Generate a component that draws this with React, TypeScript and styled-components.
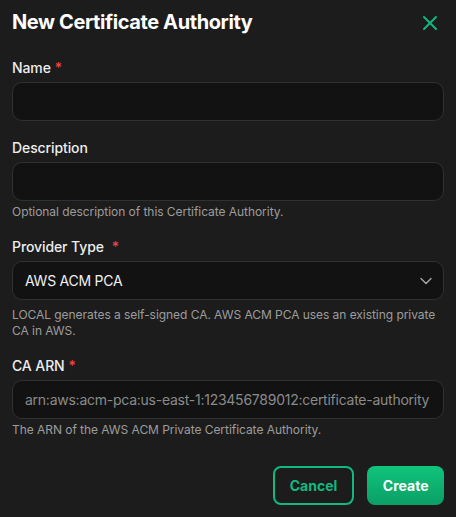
import React from "react";
import styled, { createGlobalStyle } from "styled-components";
import { X, ChevronDown } from "lucide-react";

const Global = createGlobalStyle`
  html, body {
    margin: 0;
    padding: 0;
    background: #1c1c1c;
  }
  * { box-sizing: border-box; }
  body {
    font-family: Inter, "Noto Sans", "Liberation Sans", sans-serif;
    color: #ececec;
    -webkit-font-smoothing: antialiased;
  }
`;

const Dialog = styled.div`
  width: 456px;
  height: 517px;
  background: #1c1c1c;
  padding: 4px 12px 12px 12px;
  display: flex;
  flex-direction: column;
`;

const Header = styled.div`
  display: flex;
  align-items: center;
  justify-content: space-between;
  height: 36px;
`;

const Title = styled.h2`
  margin: 0;
  font-size: 20px;
  line-height: 28px;
  font-weight: 700;
  color: #ffffff;
  letter-spacing: -0.4px;
`;

const CloseButton = styled.button`
  background: none;
  border: none;
  padding: 0;
  margin-right: 2px;
  margin-top: 2px;
  color: #10b981;
  display: flex;
  cursor: pointer;
`;

const Form = styled.div`
  display: flex;
  flex-direction: column;
  gap: 17px;
  margin-top: 18px;
`;

const Field = styled.div`
  display: flex;
  flex-direction: column;
`;

const Label = styled.label`
  font-size: 14px;
  line-height: 20px;
  font-weight: 500;
  color: #ededed;
  margin-bottom: 4px;
  letter-spacing: -0.1px;
`;

const Req = styled.span<{ $gap?: number }>`
  color: #ef4444;
  margin-left: ${(p) => p.$gap ?? 4}px;
`;

const InputBox = styled.div`
  height: 39px;
  border: 1px solid #303030;
  background: #121212;
  border-radius: 10px;
  display: flex;
  align-items: center;
  padding: 0 12px;
  overflow: hidden;
`;

const InputText = styled.span<{ $placeholder?: boolean }>`
  font-size: 14px;
  letter-spacing: -0.25px;
  color: ${(p) => (p.$placeholder ? "#8a8a8a" : "#f0f0f0")};
  white-space: nowrap;
  flex: 1;
  overflow: hidden;
`;

const Chevron = styled.span`
  color: #a8a8a8;
  display: flex;
  margin-right: -5px;
`;

const Help = styled.p<{ $top?: number }>`
  margin: ${(p) => p.$top ?? 3}px 0 0 0;
  font-size: 12px;
  line-height: 16px;
  color: #9c9c9c;
  letter-spacing: -0.05px;
`;

const Footer = styled.div`
  margin-top: auto;
  display: flex;
  justify-content: flex-end;
  gap: 13px;
`;

const Button = styled.button<{ $primary?: boolean }>`
  height: 39px;
  padding: 0 ${(p) => (p.$primary ? "15.5px" : "15px")};
  border-radius: 8px;
  font-family: inherit;
  font-size: 14px;
  font-weight: 700;
  cursor: pointer;
  border: ${(p) => (p.$primary ? "none" : "2px solid #10b981")};
  background: ${(p) =>
    p.$primary ? "linear-gradient(180deg, #10c47c 0%, #0a9f65 100%)" : "transparent"};
  color: ${(p) => (p.$primary ? "#ffffff" : "#10b981")};
`;

export default function App() {
  return (
    <>
      <Global />
      <Dialog>
        <Header>
          <Title>New Certificate Authority</Title>
          <CloseButton aria-label="Close">
            <X size={24} strokeWidth={2} />
          </CloseButton>
        </Header>
        <Form>
          <Field>
            <Label>
              Name<Req>*</Req>
            </Label>
            <InputBox>
              <InputText />
            </InputBox>
          </Field>
          <Field>
            <Label>Description</Label>
            <InputBox>
              <InputText />
            </InputBox>
            <Help>Optional description of this Certificate Authority.</Help>
          </Field>
          <Field>
            <Label>
              Provider Type<Req $gap={8}>*</Req>
            </Label>
            <InputBox>
              <InputText>AWS ACM PCA</InputText>
              <Chevron>
                <ChevronDown size={20} strokeWidth={1.6} />
              </Chevron>
            </InputBox>
            <Help $top={7}>
              LOCAL generates a self-signed CA. AWS ACM PCA uses an existing private CA in AWS.
            </Help>
          </Field>
          <Field>
            <Label>
              CA ARN<Req>*</Req>
            </Label>
            <InputBox>
              <InputText $placeholder>
                arn:aws:acm-pca:us-east-1:123456789012:certificate-authority
              </InputText>
            </InputBox>
            <Help>The ARN of the AWS ACM Private Certificate Authority.</Help>
          </Field>
        </Form>
        <Footer>
          <Button>Cancel</Button>
          <Button $primary>Create</Button>
        </Footer>
      </Dialog>
    </>
  );
}
